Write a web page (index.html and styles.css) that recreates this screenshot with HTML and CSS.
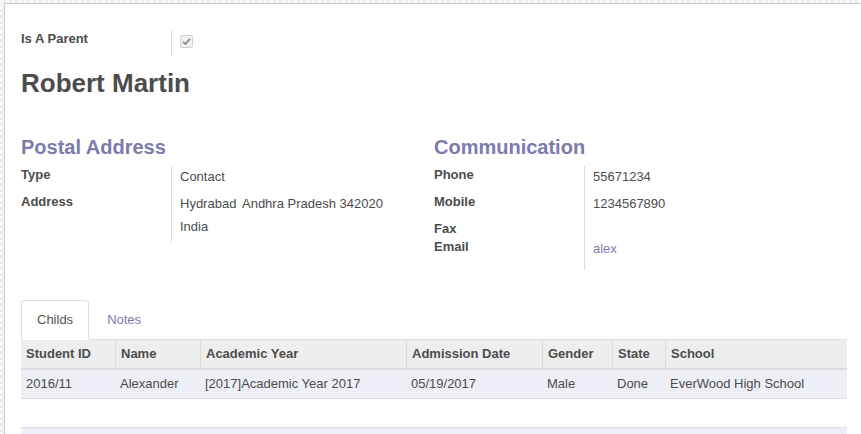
FILE: index.html
```html
<!DOCTYPE html>
<html>
<head>
<meta charset="utf-8">
<link rel="stylesheet" href="styles.css">
</head>
<body>
<div class="page">
  <div class="sheet">
    <div class="row parent-row">
      <div class="label">Is A Parent</div>
      <div class="value">
        <span class="checkbox">
          <svg width="9" height="9" viewBox="0 0 9 9"><path d="M1 4.8 L3.4 7.2 L8 1.8" fill="none" stroke="#8f8f8f" stroke-width="1.9" stroke-linejoin="round"/></svg>
        </span>
      </div>
    </div>
    <h1 class="title">Robert Martin</h1>
    <div class="groups">
      <div class="group">
        <h2 class="group-title">Postal Address</h2>
        <div class="row">
          <div class="label">Type</div>
          <div class="value">Contact</div>
        </div>
        <div class="row">
          <div class="label">Address</div>
          <div class="value">
            <div>Hydrabad <span class="gap"></span>Andhra Pradesh 342020</div>
            <div class="line2">India</div>
          </div>
        </div>
      </div>
      <div class="group">
        <h2 class="group-title">Communication</h2>
        <div class="row">
          <div class="label">Phone</div>
          <div class="value">55671234</div>
        </div>
        <div class="row">
          <div class="label">Mobile</div>
          <div class="value">1234567890</div>
        </div>
        <div class="row">
          <div class="label">Fax</div>
          <div class="value empty"></div>
        </div>
        <div class="row">
          <div class="label">Email</div>
          <div class="value email"><span class="link">alex</span></div>
        </div>
      </div>
    </div>
    <div class="notebook">
      <ul class="tabs">
        <li class="tab active">Childs</li>
        <li class="tab">Notes</li>
      </ul>
      <table class="list">
        <colgroup>
          <col style="width:94px"><col style="width:85px"><col style="width:206px"><col style="width:136px"><col style="width:70px"><col style="width:53px"><col style="width:182px">
        </colgroup>
        <thead>
          <tr><th>Student ID</th><th>Name</th><th>Academic Year</th><th>Admission Date</th><th>Gender</th><th>State</th><th>School</th></tr>
        </thead>
        <tbody>
          <tr class="data"><td>2016/11</td><td>Alexander</td><td>[2017]Academic Year 2017</td><td>05/19/2017</td><td>Male</td><td>Done</td><td>EverWood High School</td></tr>
          <tr class="filler"><td></td><td></td><td></td><td></td><td></td><td></td><td></td></tr>
        </tbody>
        <tfoot>
          <tr><td></td><td></td><td></td><td></td><td></td><td></td><td></td></tr>
        </tfoot>
      </table>
    </div>
  </div>
</div>
</body>
</html>
```

FILE: styles.css
```css
html, body {
  margin: 0;
  padding: 0;
}
body {
  width: 861px;
  height: 434px;
  overflow: hidden;
  font-family: "Liberation Sans", Arial, sans-serif;
  font-size: 13px;
  line-height: 18px;
  color: #4c4c4c;
  background-color: #f7f7f7;
  background-image: repeating-conic-gradient(#ececec 0 25%, #fbfbfb 0 50%);
  background-size: 6px 6px;
}
.page {
  padding: 3px 0 0 4px;
}
.sheet {
  width: 826px;
  min-height: 440px;
  background: #fff;
  border-left: 1px solid #c9c9d6;
  border-top: 1px solid #c9c9d6;
  padding: 26px 16px 0 16px;
}
.row {
  display: grid;
  grid-template-columns: 151px 1fr;
}
.label {
  font-weight: bold;
  border-right: 1px solid #dcdcdc;
}
.value {
  padding: 2px 0 7px 8px;
}
.value .gap {
  display: inline-block;
  width: 2px;
}
.value .line2 {
  margin-top: 5px;
}
.value.empty {
  padding: 0;
}
.value.email {
  padding-bottom: 12px;
}
.parent-row {
  width: 413px;
}
.parent-row .value {
  padding: 5px 0 8px 8px;
}
.checkbox {
  display: flex;
  align-items: center;
  justify-content: center;
  width: 11px;
  height: 11px;
  border: 1px solid #d2d2d2;
  border-radius: 2px;
  background: #f1f1f1;
}
.title {
  margin: 13px 0 0 0;
  font-size: 26px;
  line-height: 29px;
  font-weight: bold;
  color: #4c4c4c;
}
.groups {
  display: grid;
  grid-template-columns: 413px 413px;
  margin-top: 38px;
}
.group-title {
  margin: 0 0 8px 0;
  font-size: 20px;
  line-height: 22px;
  font-weight: bold;
  color: #7c7bad;
}
.link {
  color: #7c7bad;
}
.notebook {
  margin-top: 30px;
}
.tabs {
  list-style: none;
  margin: 0;
  padding: 0;
  display: flex;
  border-bottom: 1px solid #dddddd;
}
.tab {
  padding: 10px 15px;
  line-height: 18px;
  border: 1px solid transparent;
  border-radius: 4px 4px 0 0;
  margin: 0 2px -1px 0;
  color: #7c7bad;
}
.tab.active {
  color: #555555;
  background: #fff;
  border-color: #dddddd #dddddd transparent #dddddd;
}
.list {
  width: 826px;
  table-layout: fixed;
  border-collapse: separate;
  border-spacing: 0;
}
.list th, .list td {
  padding: 5px;
  height: 18px;
  text-align: left;
  white-space: nowrap;
  overflow: hidden;
}
.list th {
  font-weight: bold;
  background: #eeeeee;
  border-bottom: 2px solid #dcdcdc;
}
.list th + th {
  border-left: 1px solid #dcdcdc;
}
.list tr.data td {
  background: #eeeef6;
  border-bottom: 1px solid #dddddd;
}
.list tr.filler td {
  height: 18px;
}
.list tfoot td {
  background: #eeeef6;
  border-top: 1px solid #dddddd;
}
```
